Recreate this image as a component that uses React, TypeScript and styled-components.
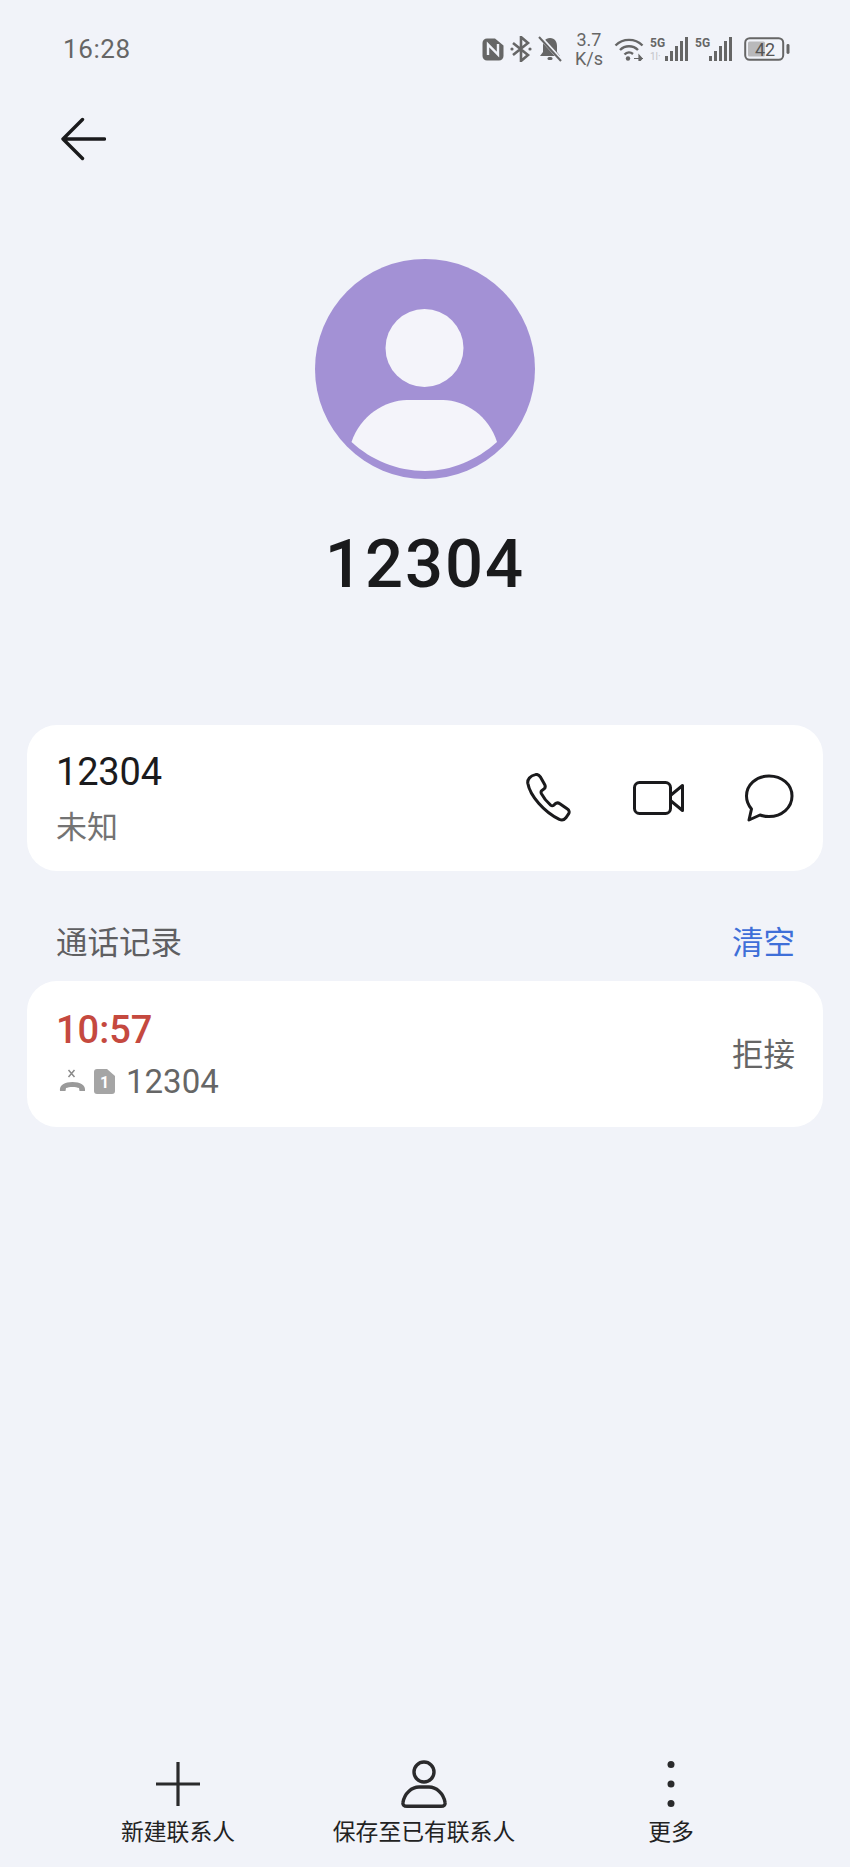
import React from "react";
import styled, { createGlobalStyle } from "styled-components";

const Global = createGlobalStyle`
  html, body { margin: 0; padding: 0; background: #f1f3f9; }
  * { box-sizing: border-box; }
`;
const sans = `Roboto, "Noto Sans CJK SC", sans-serif`;

const Page = styled.div`
  width: 850px; height: 1867px; display: flex; flex-direction: column;
  background: #f1f3f9; font-family: ${sans}; overflow: hidden;
`;
const StatusBar = styled.div`
  height: 98px; padding: 0 60px 0 63px; display: flex; align-items: center; justify-content: space-between;
`;
const Clock = styled.span`font-size: 26px; color: #666; letter-spacing: .6px; font-weight: 400;`;
const StatusIcons = styled.div`display: flex; align-items: center; gap: 6px;`;
const Speed = styled.div`
  width: 30px; margin: 0 4px 0 6px; font-size: 18px; line-height: 19px; color: #666; text-align: center;
`;
const BackRow = styled.div`height: 82px; padding-left: 60px; display: flex; align-items: center;`;
const AvatarWrap = styled.div`margin-top: 79px; display: flex; justify-content: center;`;
const Name = styled.div`
  margin-top: 43px; height: 84px; line-height: 84px; text-align: center;
  font-size: 67px; font-weight: 500; color: #1a1a1c; letter-spacing: 2px;
`;
const Card = styled.div<{ $mt?: number }>`
  margin: ${p => p.$mt ?? 0}px 27px 0 27px; height: 146px; border-radius: 30px; background: #fff;
  padding: 0 29px; display: flex; align-items: center; justify-content: space-between;
`;
const TextStack = styled.div`display: flex; flex-direction: column; padding-top: 3px;`;
const Number = styled.div`font-size: 38px; line-height: 46px; color: #1b1b1d; letter-spacing: -.2px;`;
const Sub = styled.div`font-size: 31px; line-height: 46px; color: #737373; margin-top: 10px;`;
const Actions = styled.div`display: flex; align-items: center; gap: 60px;`;
const SectionHead = styled.div`
  height: 110px; padding: 27px 55px 0 56px; display: flex; align-items: center; justify-content: space-between;
  font-size: 31.5px;
`;
const SectionTitle = styled.span`color: #5f5f62;`;
const Clear = styled.span`color: #3f6fd8;`;
const Time = styled.div`font-size: 38px; line-height: 46px; font-weight: 500; color: #c5493f;`;
const CallRow = styled.div`display: flex; align-items: center; margin-top: 5px; height: 46px; padding-left: 3px;`;
const CallNumber = styled.span`font-size: 33px; color: #666; margin-left: 11px;`;
const Status = styled.span`font-size: 31.5px; color: #666; padding-bottom: 5px; margin-right: -1px;`;
const BottomBar = styled.div`
  margin-top: auto; height: 107px; display: grid; grid-template-columns: 356px 136px 358px;
`;
const Tab = styled.div`
  display: flex; flex-direction: column; align-items: center; justify-content: flex-start;
  white-space: nowrap; min-width: 0;
`;
const TabIcon = styled.div`height: 48px; display: flex; align-items: center; justify-content: center;`;
const TabLabel = styled.span`margin-top: 8px; font-size: 22.8px; line-height: 34px; color: #222;`;

const Svg = styled.svg`display: block; flex: none;`;

const App = () => (
  <Page>
    <Global />
    <StatusBar>
      <Clock>16:28</Clock>
      <StatusIcons>
        <Svg width="22" height="23" viewBox="0 0 22 23">
          <path d="M5 0.500h8l8.500 7V18a4.500 4.500 0 0 1-4.500 4.500H5A4.500 4.500 0 0 1 .500 18V5A4.500 4.500 0 0 1 5 .500z" fill="#666" />
          <path d="M6 17V6.500l10 10V6" fill="none" stroke="#f1f3f9" strokeWidth="2.400" />
        </Svg>
        <Svg width="22" height="26" viewBox="0 0 22 26">
          <path d="M3 7l15 12-7 6V1l7 6L3 19" fill="none" stroke="#666" strokeWidth="2.600" />
          <circle cx="2" cy="13" r="1.600" fill="#666" /><circle cx="20" cy="13" r="1.600" fill="#666" />
        </Svg>
        <Svg width="24" height="26" viewBox="0 0 24 26">
          <path d="M12 2c5 0 7 4 7 8v6l3 4H2l3-4v-6c0-4 2-8 7-8z" fill="#666" />
          <rect x="9.500" y="21" width="5" height="3" rx="1.500" fill="#666" />
          <path d="M2 1l21 23" stroke="#f1f3f9" strokeWidth="4" />
          <path d="M1 1l22 24" stroke="#666" strokeWidth="2" />
        </Svg>
        <Speed>3.7<br />K/s</Speed>
        <Svg width="30" height="24" viewBox="0 0 30 24">
          <g fill="none" stroke="#666" strokeWidth="2.400">
            <path d="M1.500 8.500C9 1 21 1 28.500 8.500" />
            <path d="M6 13c5-5 13-5 18 0" />
            <path d="M10.500 17.500c2.500-2.500 6-2.500 8.500-.5" />
          </g>
          <circle cx="14" cy="21.500" r="2.200" fill="#666" />
          <path d="M20 21.500h9M25 18v7l3-3.500z" stroke="#666" strokeWidth="1.200" fill="#666" />
        </Svg>
        <Svg width="39" height="26" viewBox="0 0 39 26">
          <text x="0" y="11" fontSize="12" fontWeight="700" fontFamily="Roboto, sans-serif" fill="#666">5G</text>
          <text x="0" y="24" fontSize="10" fontFamily="Roboto, sans-serif" fill="#c4c4c8">1l·</text>
          <g fill="#666">
            <rect x="15" y="20" width="3" height="5" /><rect x="20" y="15" width="3" height="10" />
            <rect x="25" y="10" width="3" height="15" /><rect x="30" y="5" width="3" height="20" />
            <rect x="35" y="1" width="3" height="24" />
          </g>
        </Svg>
        <Svg width="39" height="26" viewBox="0 0 39 26">
          <text x="0" y="11" fontSize="12" fontWeight="700" fontFamily="Roboto, sans-serif" fill="#666">5G</text>
          <g fill="#666">
            <rect x="14" y="20" width="3" height="5" /><rect x="19" y="15" width="3" height="10" />
            <rect x="24" y="10" width="3" height="15" /><rect x="29" y="5" width="3" height="20" />
            <rect x="34" y="1" width="3" height="24" />
          </g>
        </Svg>
        <Svg width="46" height="24" viewBox="0 0 46 24" style={{ marginLeft: 4 }}>
          <rect x="1.200" y="1.200" width="38" height="21.600" rx="4.500" fill="none" stroke="#666" strokeWidth="2" />
          <rect x="4" y="4.500" width="17" height="15" rx="1.500" fill="#b9b9bb" />
          <text x="21" y="19" textAnchor="middle" fontSize="18" fontFamily="Roboto, sans-serif" fill="#555">42</text>
          <rect x="42.500" y="7" width="3" height="10" rx="1.400" fill="#666" />
        </Svg>
      </StatusIcons>
    </StatusBar>

    <BackRow>
      <Svg width="46" height="44" viewBox="0 0 46 44">
        <path d="M22.500 2.500L3 22l19.500 19.500M3 22h41.500" fill="none" stroke="#1a1a1c" strokeWidth="3.400" strokeLinecap="round" strokeLinejoin="round" />
      </Svg>
    </BackRow>

    <AvatarWrap>
      <Svg width="220" height="220" viewBox="0 0 220 220">
        <circle cx="110" cy="110" r="110" fill="#a391d5" />
        <circle cx="109.500" cy="89" r="39" fill="#f4f4fa" />
        <path d="M36.500 183C45 157 70 141 92 141h36c22 0 46 16 54 42-20 18-46 29-72 29-28 0-54-11-73.500-29z" fill="#f4f4fa" />
      </Svg>
    </AvatarWrap>

    <Name>12304</Name>

    <Card $mt={119}>
      <TextStack>
        <Number>12304</Number>
        <Sub>未知</Sub>
      </TextStack>
      <Actions>
        <Svg width="48" height="50" viewBox="0 1 43 46">
          <path d="M9 2.500c2-.5 3.500.5 4.500 2l4 7c1 2 .5 3.500-1 4.500l-1.500 1c-1 .8-1 1.800-.5 3 2 4 5 7.500 8.500 10.500 1 .8 2 .8 3 0l1-1c1.300-1.200 3-1.300 4.500-.3l7 5c1.500 1 2 3 1 4.500l-2.500 3.500c-1.500 2-3.500 2.500-6 1.500C17 37 4 22 2 10.500 1.500 7 4 3.500 9 2.500z" fill="none" stroke="#1a1a1c" strokeWidth="2.800" strokeLinejoin="round" />
        </Svg>
        <Svg width="51" height="34" viewBox="0 0 51 34">
          <rect x="1.500" y="1.500" width="36" height="31" rx="5" fill="none" stroke="#1a1a1c" strokeWidth="3" />
          <path d="M38 14L49.500 4.500v25L38 20" fill="none" stroke="#1a1a1c" strokeWidth="3" strokeLinejoin="round" />
        </Svg>
        <Svg width="50" height="48" viewBox="0 0 50 48">
          <path d="M25 2C12 2 2.500 11 2.500 22c0 5 2 9.500 5 13L5 46l11-5c3 1 6 1.500 9 1.500 13 0 23-9 23-20.500S38 2 25 2z" fill="none" stroke="#1a1a1c" strokeWidth="3" strokeLinejoin="round" />
        </Svg>
      </Actions>
    </Card>

    <SectionHead>
      <SectionTitle>通话记录</SectionTitle>
      <Clear>清空</Clear>
    </SectionHead>

    <Card>
      <TextStack>
        <Time>10:57</Time>
        <CallRow>
          <Svg width="27" height="25" viewBox="0 0 27 25">
            <path d="M9.500 1l6 7M15.500 1l-6 7" stroke="#8a8a8a" strokeWidth="1.500" />
            <path d="M1 22c-1-6 5-9 12.500-9S27 16 26 22h-5.500l-.5-3c-3-1.500-10-1.500-13 0l-.5 3z" fill="#9a9a9a" />
          </Svg>
          <Svg width="21" height="25" viewBox="0 0 21 25" style={{ marginLeft: 8 }}>
            <path d="M3 0h10l8 7v15a3 3 0 0 1-3 3H3a3 3 0 0 1-3-3V3a3 3 0 0 1 3-3z" fill="#a5a5a5" />
            <text x="10.500" y="19" textAnchor="middle" fontSize="16" fontWeight="700" fontFamily="Roboto, sans-serif" fill="#fff">1</text>
          </Svg>
          <CallNumber>12304</CallNumber>
        </CallRow>
      </TextStack>
      <Status>拒接</Status>
    </Card>

    <BottomBar>
      <Tab>
        <TabIcon>
          <Svg width="46" height="46" viewBox="0 0 46 46">
            <path d="M23 1v44M1 23h44" stroke="#2a2a2c" strokeWidth="3.200" />
          </Svg>
        </TabIcon>
        <TabLabel>新建联系人</TabLabel>
      </Tab>
      <Tab>
        <TabIcon>
          <Svg width="46" height="48" viewBox="0 0 46 48">
            <circle cx="23" cy="12" r="10" fill="none" stroke="#2a2a2c" strokeWidth="3.400" />
            <path d="M6 46.300c-3 0-4.500-1.500-4-4C3.500 33 11 27 18 27h10c7 0 14.500 6 16 15.300.5 2.500-1 4-4 4z" fill="none" stroke="#2a2a2c" strokeWidth="3.400" strokeLinejoin="round" />
          </Svg>
        </TabIcon>
        <TabLabel>保存至已有联系人</TabLabel>
      </Tab>
      <Tab>
        <TabIcon>
          <Svg width="10" height="48" viewBox="0 0 10 48">
            <circle cx="5" cy="4.500" r="3.500" fill="#2a2a2c" /><circle cx="5" cy="24" r="3.500" fill="#2a2a2c" /><circle cx="5" cy="43.500" r="3.500" fill="#2a2a2c" />
          </Svg>
        </TabIcon>
        <TabLabel>更多</TabLabel>
      </Tab>
    </BottomBar>
  </Page>
);

export default App;
